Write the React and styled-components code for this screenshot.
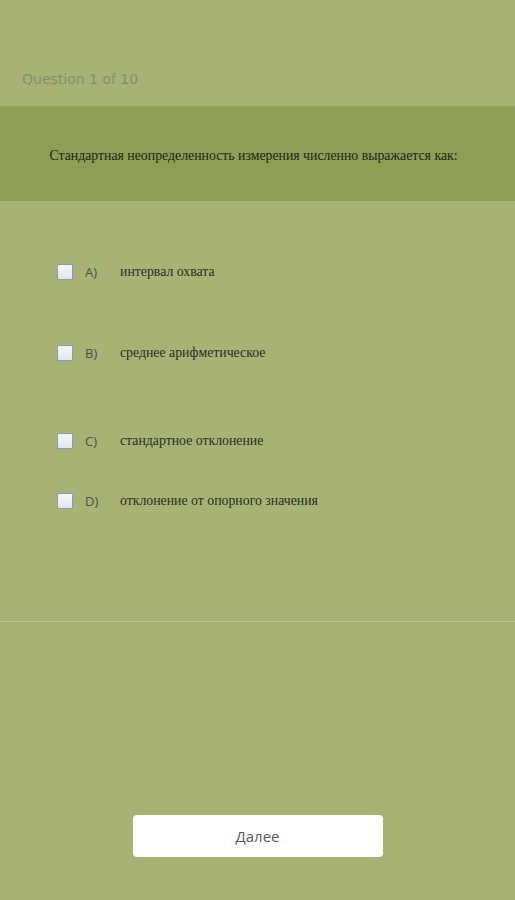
import React, { useState } from 'react';
import styled, { createGlobalStyle } from 'styled-components';

const GlobalStyle = createGlobalStyle`
    html, body {
        margin: 0;
        padding: 0;
        background: #a7b375;
    }
`;

const Page = styled.div`
    width: 100%;
    min-height: 900px;
    display: flex;
    flex-direction: column;
    background: #a7b375;
`;

const Header = styled.div`
    height: 106px;
    display: flex;
    align-items: flex-end;
    padding: 0 22px 19px;
    box-sizing: border-box;
    font-family: "DejaVu Sans", Verdana, sans-serif;
    font-size: 14px;
    color: #858f70;
`;

const QuestionBand = styled.div`
    height: 95px;
    display: flex;
    align-items: center;
    justify-content: center;
    padding: 4px 28px 0 20px;
    box-sizing: border-box;
    background: #8c9f55;
    border-top: 1px solid #93a55e;
    font-family: "Liberation Serif", "Times New Roman", serif;
    font-size: 13.8px;
    color: #1f2418;
`;

const Options = styled.div`
    height: 421px;
    display: flex;
    flex-direction: column;
    padding-left: 57px;
    box-sizing: border-box;
    border-bottom: 1px solid #b9c48e;
`;

const Row = styled.label`
    display: flex;
    align-items: center;
    height: 16px;
    margin-top: ${props => props.space}px;
    cursor: pointer;
`;

const Box = styled.span`
    width: 16px;
    height: 16px;
    box-sizing: border-box;
    border: 1px solid #8d9cb4;
    border-radius: 2px;
    background: linear-gradient(#f4f6fa, #e2e7ef);
    display: flex;
    align-items: center;
    justify-content: center;
    font-size: 12px;
`;

const Letter = styled.span`
    width: 35px;
    margin-left: 12px;
    font-family: "Open Sans", "Liberation Sans", sans-serif;
    font-size: 13px;
    color: #4b4f45;
`;

const OptionText = styled.span`
    font-family: "Liberation Serif", "Times New Roman", serif;
    font-size: 13.8px;
    color: #2a2e22;
`;

const Footer = styled.div`
    flex: 1;
    display: flex;
    justify-content: center;
    padding-top: 193px;
`;

const NextButton = styled.button`
    width: 250px;
    height: 42px;
    border: none;
    border-radius: 4px;
    background: #ffffff;
    font-family: "Open Sans", "Liberation Sans", sans-serif;
    font-size: 15px;
    color: #5a5a5a;
    cursor: pointer;
`;

const options = [
    { letter: 'A)', text: 'интервал охвата', space: 63 },
    { letter: 'B)', text: 'среднее арифметическое', space: 65 },
    { letter: 'C)', text: 'стандартное отклонение', space: 72 },
    { letter: 'D)', text: 'отклонение от опорного значения', space: 44 },
];

const App = () => {
    const [checked, setChecked] = useState({});

    return (
        <>
            <GlobalStyle />
            <Page>
                <Header>Question 1 of 10</Header>
                <QuestionBand>Стандартная неопределенность измерения численно выражается как:</QuestionBand>
                <Options>
                    { options.map(o => (
                        <Row key={ o.letter } space={ o.space }
                            onClick={ () => setChecked({ ...checked, [o.letter]: !checked[o.letter] }) }>
                            <Box>{ checked[o.letter] && '✓' }</Box>
                            <Letter>{ o.letter }</Letter>
                            <OptionText>{ o.text }</OptionText>
                        </Row>
                    )) }
                </Options>
                <Footer>
                    <NextButton>Далее</NextButton>
                </Footer>
            </Page>
        </>
    );
};

export default App;
